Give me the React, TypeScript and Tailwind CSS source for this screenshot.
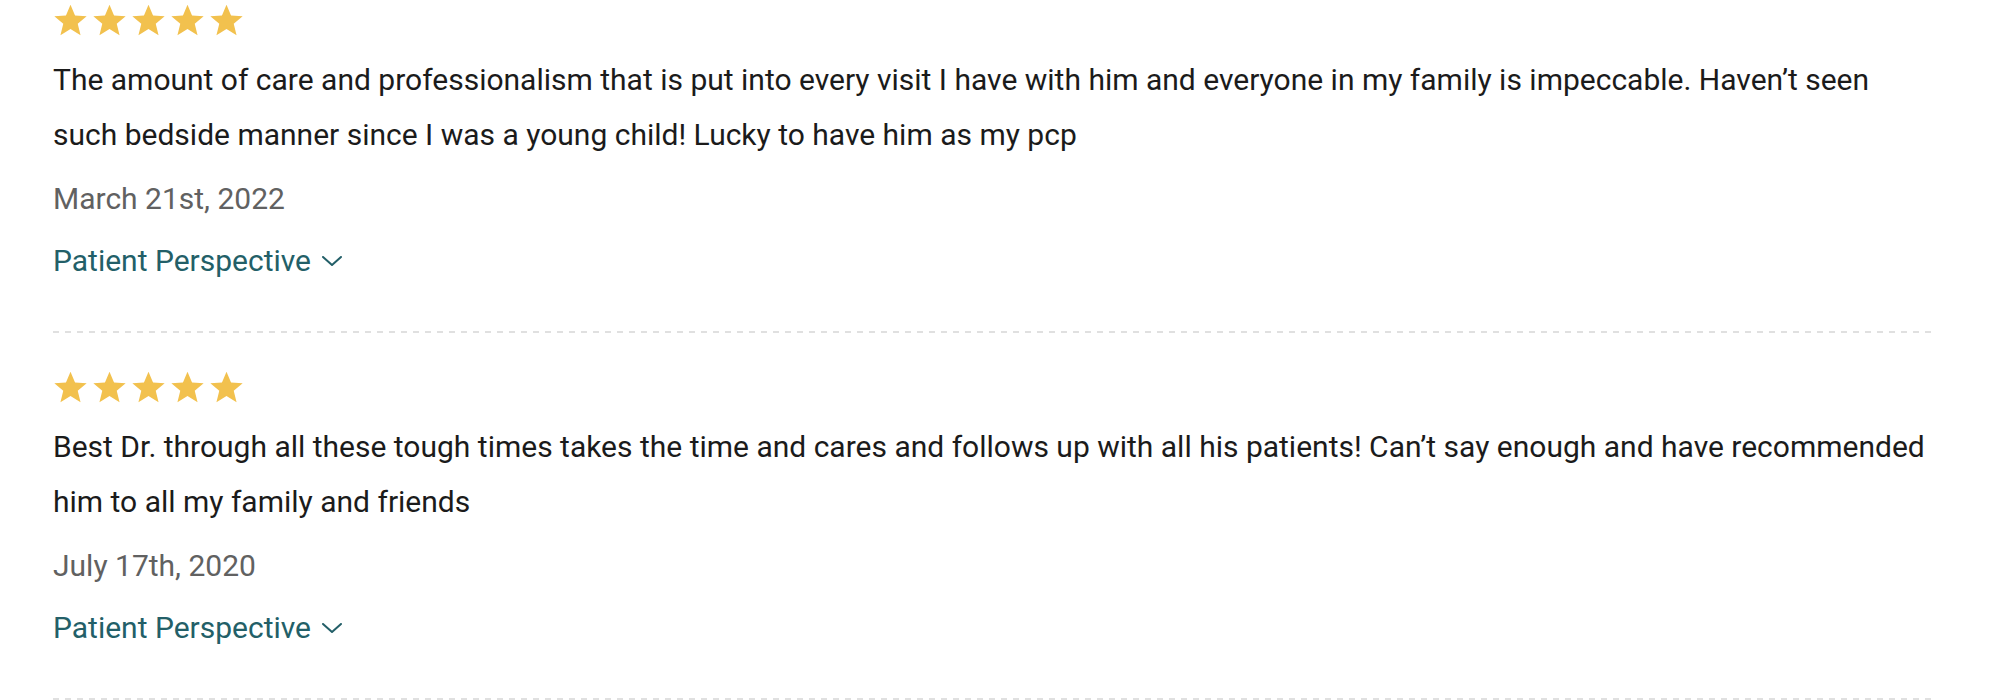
import React from "react";

const reviews = [
  {
    text: "The amount of care and professionalism that is put into every visit I have with him and everyone in my family is impeccable. Haven\u2019t seen such bedside manner since I was a young child! Lucky to have him as my pcp",
    date: "March 21st, 2022",
  },
  {
    text: "Best Dr. through all these tough times takes the time and cares and follows up with all his patients! Can\u2019t say enough and have recommended him to all my family and friends",
    date: "July 17th, 2020",
  },
];

function Star() {
  return (
    <svg viewBox="0 0 24 24" className="h-[34px] w-[35px]" aria-hidden>
      <path
        d="M12 1.2l3.2 7.6 8.2.6-6.3 5.3 2 8L12 18.4l-7.1 4.3 2-8L.6 9.4l8.2-.6z"
        fill="#f2c14e"
      />
    </svg>
  );
}

function Chevron() {
  return (
    <svg viewBox="0 0 20 10" className="h-[10px] w-[20px]" aria-hidden>
      <polyline points="1,1 10,9 19,1" fill="none" stroke="#235f68" strokeWidth="2" strokeLinecap="round" strokeLinejoin="round" />
    </svg>
  );
}

function Review({ text, date }: { text: string; date: string }) {
  return (
    <div>
      <div className="flex gap-[4px]">
        {[0, 1, 2, 3, 4].map((i) => (
          <Star key={i} />
        ))}
      </div>
      <p className="mt-[15px] text-[30px] leading-[55px] text-[#1b1b1b]">{text}</p>
      <p className="mt-[9px] text-[30px] leading-[55px] text-[#616161]">{date}</p>
      <button className="mt-[7px] flex items-center gap-[11px] text-[30px] leading-[55px] text-[#235f68]">
        <span>Patient Perspective</span>
        <Chevron />
      </button>
      {/* dashed divider */}
      <div className="mt-[43px] h-[2px] bg-[linear-gradient(to_right,#e0e0e0_50%,transparent_50%)] bg-[length:12px_2px]" />
    </div>
  );
}

export default function App() {
  return (
    <div className="min-h-screen bg-white pl-[53px] pr-[75px] pt-[3px] font-['Roboto',sans-serif]">
      <div className="flex flex-col gap-[37px]">
        {reviews.map((r) => (
          <Review key={r.date} text={r.text} date={r.date} />
        ))}
      </div>
    </div>
  );
}
